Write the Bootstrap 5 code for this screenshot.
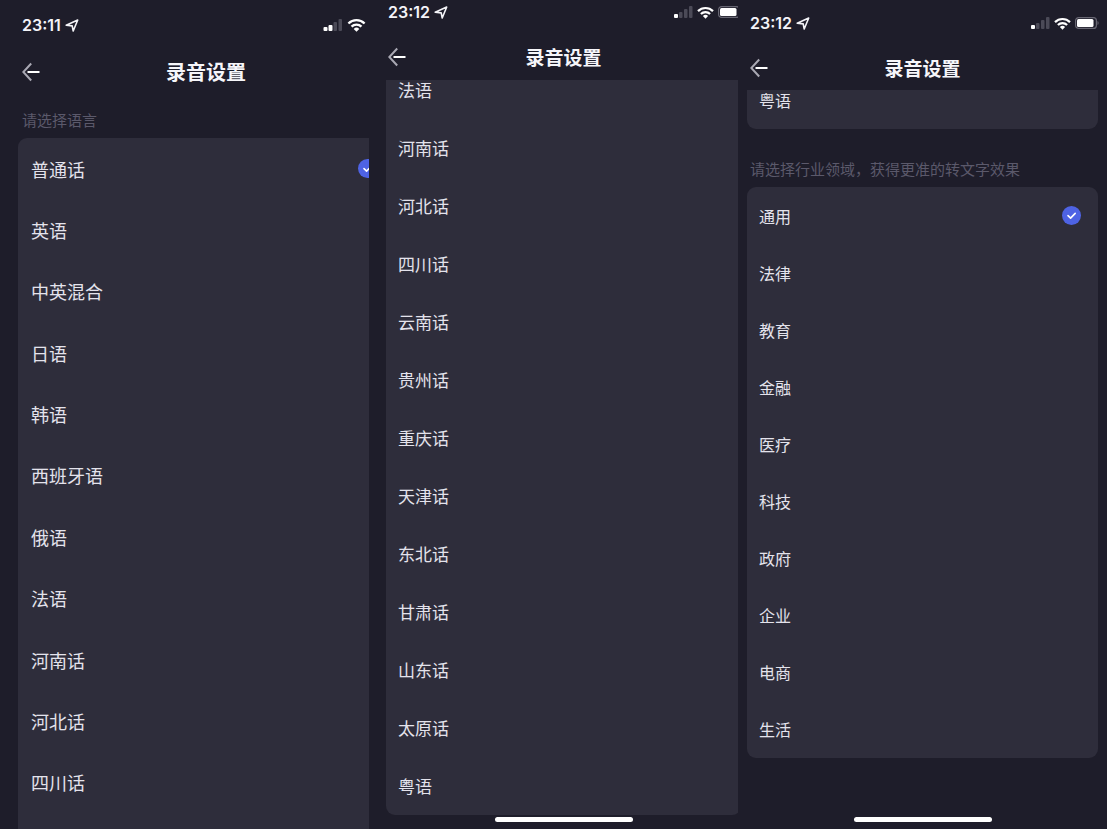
<!DOCTYPE html>
<html lang="zh-CN">
<head>
<meta charset="utf-8">
<meta name="viewport" content="width=device-width, initial-scale=1">
<title>录音设置</title>
<link href="https://cdn.jsdelivr.net/npm/bootstrap@5.3.0/dist/css/bootstrap.min.css" rel="stylesheet">
<style>
  body { background: #1e1d2a; color: #e4e3ec; font-family: "Noto Sans CJK SC", sans-serif; }
  .phone { min-height: 100vh; }
  /* The screen may be wider than its column; the column crops the rest. */
  .phone-screen { width: calc(100% + var(--spill)); }
  .phone-a { --spill: 43px; --side: 18px; --pad: 13px; --inset: 22px; --end: 16px; --text: 18px; --title: 20px; --status-h: 50px; --bar-h: 44px; }
  .phone-b { --spill: 20px; --side: 17px; --pad: 12px; --inset: 19px; --end: 16px; --text: 17px; --title: 19px; --status-h: 34px; --bar-h: 46px; --status-up: 10px; }
  .phone-c { --spill: 0px; --side: 9px; --pad: 12px; --inset: 12px; --end: 8px; --text: 16px; --title: 19px; --status-h: 46px; --bar-h: 44px; }
  .status-row { height: var(--status-h); padding: 0 var(--end) var(--status-up, 0) var(--inset); }
  .clock-text { font: 600 16px/20px Inter, sans-serif; color: #f4f4f8; }
  .title-row { height: var(--bar-h); padding: 0 var(--inset); display: grid; grid-template-columns: 1fr auto 1fr; align-items: center; }
  .title-row h1 { font-size: var(--title); line-height: 28px; font-weight: 700; color: #f6f6fa; }
  .back-btn { line-height: 0; justify-self: start; }
  .hint { font-size: 15px; line-height: 20px; color: #5b596b; margin-left: var(--inset); }
  .hint-gap { margin-top: 30px; }
  .option-box { margin: 0 var(--side); background: #2e2d3b; }
  .option { padding: 0 17px 0 var(--pad); font-size: var(--text); line-height: 24px; flex: 1 1 0; cursor: pointer; }
  /* A row that has scrolled partly under the title bar. */
  .option-short { flex: none; height: 39px; line-height: 20px; }
  .pick { appearance: none; width: 19px; height: 19px; border-radius: 50%; margin: 0; flex: none; }
  .pick:checked { background: #4e63e4 url("data:image/svg+xml,%3Csvg xmlns='http://www.w3.org/2000/svg' viewBox='0 0 19 19'%3E%3Cpath d='M6 9.6l2.6 2.5 4.6-4.7' fill='none' stroke='white' stroke-width='1.6' stroke-linecap='round' stroke-linejoin='round'/%3E%3C/svg%3E") center/100% no-repeat; }
  .round-t { border-radius: 9px 9px 0 0; }
  .round-b { border-radius: 0 0 9px 9px; }
  .round-all { border-radius: 9px; }
  .home-area { height: 14px; padding-bottom: 7px; }
  .home-area.tall { height: 71px; }
  .home-line { width: 138px; height: 5px; border-radius: 3px; background: #fff; }
</style>
</head>
<body>
<svg class="d-none" aria-hidden="true">
  <symbol id="loc" viewBox="0 0 14 13"><path d="M1.200 6.200L12.700 1 8.200 12 7.200 6.900z" fill="none" stroke="#f4f4f8" stroke-width="1.600" stroke-linejoin="round"/></symbol>
  <symbol id="wifi" viewBox="0 0 17 13"><g fill="none" stroke="#fff" stroke-width="2.200"><path d="M1 5.100a10.600 10.600 0 0 1 15 0"/><path d="M3.900 8a6.500 6.500 0 0 1 9.200 0"/></g><path d="M8.500 12.800L5.900 10.100a3.700 3.700 0 0 1 5.200 0z" fill="#fff"/></symbol>
  <symbol id="signal" viewBox="0 0 19 12"><rect y="8" width="4" height="4" rx="1" fill="#fff"/><g fill="#4b4a57"><rect x="5" y="6" width="3.500" height="6" rx="1"/><rect x="10" y="3" width="3.500" height="9" rx="1"/><rect x="15" width="3.500" height="12" rx="1"/></g></symbol>
  <symbol id="signal2" viewBox="0 0 19 12"><g fill="#fff"><rect y="8" width="4" height="4" rx="1"/><rect x="5" y="6" width="4" height="6" rx="1"/></g><g fill="#4b4a57"><rect x="10" y="3" width="3.500" height="9" rx="1"/><rect x="15" width="3.500" height="12" rx="1"/></g></symbol>
  <symbol id="battery" viewBox="0 0 24 12"><rect x=".6" y=".6" width="20.800" height="10.800" rx="3" fill="none" stroke="#686773" stroke-width="1.200"/><rect x="2" y="2" width="16.500" height="8" rx="1.500" fill="#fff"/><path d="M22.500 4v4c1.500-.6 1.500-3.400 0-4z" fill="#686773"/></symbol>
  <symbol id="back" viewBox="0 0 18 20"><path d="M9.200 1.500L1.300 10l7.900 8.500" fill="none" stroke="#a9a8b3" stroke-width="2"/><path d="M5.500 10H17.500" stroke="#fff" stroke-width="2"/></symbol>
</svg>

<main class="row g-0">
  <section class="col-4 phone phone-a overflow-hidden d-flex">
    <div class="phone-screen flex-shrink-0 d-flex flex-column">
      <div class="status-row d-flex align-items-center justify-content-between">
        <div class="d-flex align-items-center gap-1"><span class="clock-text">23:11</span><svg width="14" height="13"><use href="#loc"/></svg></div>
        <div class="d-flex align-items-center"><svg class="me-1" width="20" height="12"><use href="#signal2"/></svg><svg class="me-1" width="19" height="14"><use href="#wifi"/></svg><svg width="26" height="13"><use href="#battery"/></svg></div>
      </div>
      <header class="title-row"><button type="button" class="back-btn btn p-0 border-0" aria-label="返回"><svg width="18" height="20"><use href="#back"/></svg></button><h1 class="m-0">录音设置</h1></header>
      <h2 class="hint fw-normal mb-0 mt-3 pb-2">请选择语言</h2>
      <div class="option-box round-t flex-fill d-flex flex-column pb-3">
        <label class="option d-flex align-items-center justify-content-between">普通话<input class="pick" type="radio" name="lang" checked></label>
        <label class="option d-flex align-items-center justify-content-between">英语<input class="pick" type="radio" name="lang"></label>
        <label class="option d-flex align-items-center justify-content-between">中英混合<input class="pick" type="radio" name="lang"></label>
        <label class="option d-flex align-items-center justify-content-between">日语<input class="pick" type="radio" name="lang"></label>
        <label class="option d-flex align-items-center justify-content-between">韩语<input class="pick" type="radio" name="lang"></label>
        <label class="option d-flex align-items-center justify-content-between">西班牙语<input class="pick" type="radio" name="lang"></label>
        <label class="option d-flex align-items-center justify-content-between">俄语<input class="pick" type="radio" name="lang"></label>
        <label class="option d-flex align-items-center justify-content-between">法语<input class="pick" type="radio" name="lang"></label>
        <label class="option d-flex align-items-center justify-content-between">河南话<input class="pick" type="radio" name="lang"></label>
        <label class="option d-flex align-items-center justify-content-between">河北话<input class="pick" type="radio" name="lang"></label>
        <label class="option d-flex align-items-center justify-content-between">四川话<input class="pick" type="radio" name="lang"></label>
      </div>
    </div>
  </section>

  <section class="col-4 phone phone-b overflow-hidden d-flex">
    <div class="phone-screen flex-shrink-0 d-flex flex-column">
      <div class="status-row d-flex align-items-center justify-content-between">
        <div class="d-flex align-items-center gap-1"><span class="clock-text">23:12</span><svg width="14" height="13"><use href="#loc"/></svg></div>
        <div class="d-flex align-items-center"><svg class="me-1" width="19" height="12"><use href="#signal"/></svg><svg class="me-1" width="17" height="13"><use href="#wifi"/></svg><svg width="24" height="12"><use href="#battery"/></svg></div>
      </div>
      <header class="title-row"><button type="button" class="back-btn btn p-0 border-0" aria-label="返回"><svg width="18" height="20"><use href="#back"/></svg></button><h1 class="m-0">录音设置</h1></header>
      <div class="option-box round-b flex-fill d-flex flex-column">
        <label class="option option-short d-flex align-items-start justify-content-between">法语<input class="pick" type="radio" name="dialect"></label>
        <label class="option d-flex align-items-center justify-content-between">河南话<input class="pick" type="radio" name="dialect"></label>
        <label class="option d-flex align-items-center justify-content-between">河北话<input class="pick" type="radio" name="dialect"></label>
        <label class="option d-flex align-items-center justify-content-between">四川话<input class="pick" type="radio" name="dialect"></label>
        <label class="option d-flex align-items-center justify-content-between">云南话<input class="pick" type="radio" name="dialect"></label>
        <label class="option d-flex align-items-center justify-content-between">贵州话<input class="pick" type="radio" name="dialect"></label>
        <label class="option d-flex align-items-center justify-content-between">重庆话<input class="pick" type="radio" name="dialect"></label>
        <label class="option d-flex align-items-center justify-content-between">天津话<input class="pick" type="radio" name="dialect"></label>
        <label class="option d-flex align-items-center justify-content-between">东北话<input class="pick" type="radio" name="dialect"></label>
        <label class="option d-flex align-items-center justify-content-between">甘肃话<input class="pick" type="radio" name="dialect"></label>
        <label class="option d-flex align-items-center justify-content-between">山东话<input class="pick" type="radio" name="dialect"></label>
        <label class="option d-flex align-items-center justify-content-between">太原话<input class="pick" type="radio" name="dialect"></label>
        <label class="option d-flex align-items-center justify-content-between">粤语<input class="pick" type="radio" name="dialect"></label>
      </div>
      <div class="home-area d-flex align-items-end justify-content-center"><div class="home-line"></div></div>
    </div>
  </section>

  <section class="col-4 phone phone-c overflow-hidden d-flex">
    <div class="phone-screen flex-shrink-0 d-flex flex-column">
      <div class="status-row d-flex align-items-center justify-content-between">
        <div class="d-flex align-items-center gap-1"><span class="clock-text">23:12</span><svg width="14" height="13"><use href="#loc"/></svg></div>
        <div class="d-flex align-items-center"><svg class="me-1" width="19" height="12"><use href="#signal"/></svg><svg class="me-1" width="17" height="13"><use href="#wifi"/></svg><svg width="24" height="12"><use href="#battery"/></svg></div>
      </div>
      <header class="title-row"><button type="button" class="back-btn btn p-0 border-0" aria-label="返回"><svg width="18" height="20"><use href="#back"/></svg></button><h1 class="m-0">录音设置</h1></header>
      <div class="option-box round-b">
        <label class="option option-short d-flex align-items-start justify-content-between">粤语<input class="pick" type="radio" name="lang3"></label>
      </div>
      <h2 class="hint hint-gap fw-normal mb-0 pb-2">请选择行业领域，获得更准的转文字效果</h2>
      <div class="option-box round-all flex-fill d-flex flex-column">
        <label class="option d-flex align-items-center justify-content-between">通用<input class="pick" type="radio" name="field" checked></label>
        <label class="option d-flex align-items-center justify-content-between">法律<input class="pick" type="radio" name="field"></label>
        <label class="option d-flex align-items-center justify-content-between">教育<input class="pick" type="radio" name="field"></label>
        <label class="option d-flex align-items-center justify-content-between">金融<input class="pick" type="radio" name="field"></label>
        <label class="option d-flex align-items-center justify-content-between">医疗<input class="pick" type="radio" name="field"></label>
        <label class="option d-flex align-items-center justify-content-between">科技<input class="pick" type="radio" name="field"></label>
        <label class="option d-flex align-items-center justify-content-between">政府<input class="pick" type="radio" name="field"></label>
        <label class="option d-flex align-items-center justify-content-between">企业<input class="pick" type="radio" name="field"></label>
        <label class="option d-flex align-items-center justify-content-between">电商<input class="pick" type="radio" name="field"></label>
        <label class="option d-flex align-items-center justify-content-between">生活<input class="pick" type="radio" name="field"></label>
      </div>
      <div class="home-area tall d-flex align-items-end justify-content-center"><div class="home-line"></div></div>
    </div>
  </section>
</main>
<script src="https://cdn.jsdelivr.net/npm/bootstrap@5.3.0/dist/js/bootstrap.bundle.min.js"></script>
</body>
</html>
